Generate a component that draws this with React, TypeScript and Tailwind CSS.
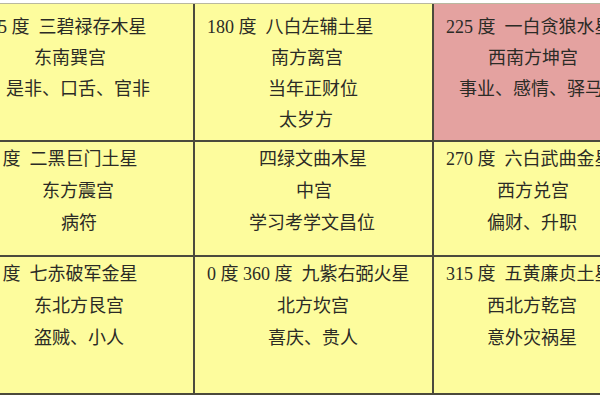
type Line = { text: string; pl: number };
type Cell = { lines: Line[]; pink?: boolean };

// padding-left per line, measured from the reference
const rows: { pt: string; lead: string; cells: Cell[] }[] = [
  {
    pt: "pt-[8px]",
    lead: "leading-[31px]",
    cells: [
      {
        lines: [
          { text: "135 度  三碧禄存木星", pl: 27 },
          { text: "东南巽宫", pl: 81 },
          { text: "是非、口舌、官非", pl: 53 },
        ],
      },
      {
        lines: [
          { text: "180 度  八白左辅土星", pl: 12 },
          { text: "南方离宫", pl: 76 },
          { text: "当年正财位", pl: 73 },
          { text: "太岁方", pl: 84 },
        ],
      },
      {
        pink: true,
        lines: [
          { text: "225 度  一白贪狼水星", pl: 12 },
          { text: "西南方坤宫", pl: 54 },
          { text: "事业、感情、驿马", pl: 25 },
        ],
      },
    ],
  },
  {
    pt: "pt-[1px]",
    lead: "leading-[32px]",
    cells: [
      {
        lines: [
          { text: "90 度  二黑巨门土星", pl: 27 },
          { text: "东方震宫", pl: 89 },
          { text: "病符", pl: 108 },
        ],
      },
      {
        lines: [
          { text: "四绿文曲木星", pl: 64 },
          { text: "中宫", pl: 101 },
          { text: "学习考学文昌位", pl: 54 },
        ],
      },
      {
        lines: [
          { text: "270 度  六白武曲金星", pl: 12 },
          { text: "西方兑宫", pl: 63 },
          { text: "偏财、升职", pl: 53 },
        ],
      },
    ],
  },
  {
    pt: "pt-[1px]",
    lead: "leading-[32px]",
    cells: [
      {
        lines: [
          { text: "45 度  七赤破军金星", pl: 27 },
          { text: "东北方艮宫", pl: 81 },
          { text: "盗贼、小人", pl: 81 },
        ],
      },
      {
        lines: [
          { text: "0 度 360 度  九紫右弼火星", pl: 12 },
          { text: "北方坎宫", pl: 82 },
          { text: "喜庆、贵人", pl: 73 },
        ],
      },
      {
        lines: [
          { text: "315 度  五黄廉贞土星", pl: 12 },
          { text: "西北方乾宫", pl: 53 },
          { text: "意外灾祸星", pl: 53 },
        ],
      },
    ],
  },
];

const rowHeights = ["h-[136px]", "h-[113px]", "h-[136px]"];

export default function App() {
  return (
    <div className="w-[600px] h-[400px] overflow-hidden bg-white pt-[3px]">
      <div
        className="-ml-[47px] w-[720px] grid grid-cols-[240px_237px_241px] gap-[2px] bg-[#4b4a3c] border-t border-t-[#b9b8a0] border-b-2 border-b-[#4b4a3c] text-[18px] text-[#2b2b26]"
        style={{ fontFamily: '"Liberation Serif", "Noto Sans CJK SC", serif' }}
      >
        {rows.map((row, ri) =>
          row.cells.map((cell, ci) => (
            <div
              key={`${ri}-${ci}`}
              className={`${rowHeights[ri]} ${row.pt} ${row.lead} ${
                cell.pink ? "bg-[#e4a2a0]" : "bg-[#fdfc9d]"
              } overflow-hidden`}
            >
              {cell.lines.map((line, li) => (
                <div
                  key={li}
                  className="whitespace-pre"
                  style={{ paddingLeft: line.pl }}
                >
                  {line.text}
                </div>
              ))}
            </div>
          ))
        )}
      </div>
    </div>
  );
}
